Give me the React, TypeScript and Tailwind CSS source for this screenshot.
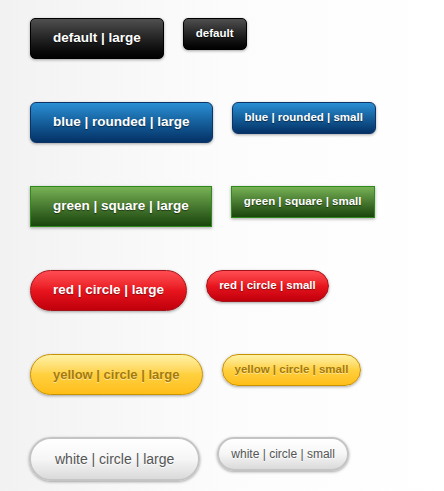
const font = "font-['Liberation_Sans',Arial,sans-serif]"

const rows = [
  {
    large: "default | large",
    small: "default",
    cls: "rounded-[5px] border border-black bg-linear-to-b from-[#505050] to-[#020202] text-white font-bold text-shadow-[0_1px_1px_rgba(0,0,0,0.6)]",
    size: "text-[13.5px]",
  },
  {
    large: "blue | rounded | large",
    small: "blue | rounded | small",
    cls: "rounded-[6px] border border-[#0b3566] bg-linear-to-b from-[#2a8fd4] to-[#053266] text-white font-bold text-shadow-[0_1px_1px_rgba(0,0,0,0.5)]",
    size: "text-[13.5px]",
  },
  {
    large: "green | square | large",
    small: "green | square | small",
    cls: "border border-[#2f8a1c] bg-linear-to-b from-[#78b255] to-[#1a450d] text-white font-bold text-shadow-[0_1px_1px_rgba(0,0,0,0.5)]",
    size: "text-[13.5px]",
  },
  {
    large: "red | circle | large",
    small: "red | circle | small",
    cls: "rounded-full border border-[#a3141a] bg-linear-to-b from-[#ff4b52] via-[#e8141d] to-[#c0000b] text-white font-bold text-shadow-[0_1px_1px_rgba(0,0,0,0.4)]",
    size: "text-[13.5px]",
  },
  {
    large: "yellow | circle | large",
    small: "yellow | circle | small",
    cls: "rounded-full border border-[#c99200] bg-linear-to-b from-[#fff2a4] via-[#ffd03e] to-[#ffbe15] text-[#a57a0a] font-bold text-shadow-[0_1px_0_rgba(255,255,255,0.5)]",
    size: "text-[13px]",
  },
  {
    large: "white | circle | large",
    small: "white | circle | small",
    cls: "rounded-full border-2 border-[#c4c4c4] bg-linear-to-b from-white via-[#f6f6f6] to-[#dadada] text-[#555] font-normal text-shadow-[0_1px_0_rgba(255,255,255,0.8)]",
    size: "text-[14px]",
    white: true,
  },
]

export default function App() {
  return (
    <div className={`min-h-screen w-full bg-linear-to-r from-[#f2f2f2] via-[#fcfcfc] to-white ${font}`}>
      <div className="flex flex-col gap-[43px] pl-[30px] pt-[18px]">
        {rows.map((row, i) => (
          <div key={i} className={`flex items-start ${row.white ? "-mt-px -ml-px gap-[17px]" : "gap-[19px]"}`}>
            <button
              className={`flex items-center justify-center shadow-[0_1px_3px_rgba(0,0,0,0.35)] ${row.white ? "h-[44px] px-[24px]" : "h-[41px] px-[22px]"} ${row.size} ${row.cls}`}
            >
              {row.large}
            </button>
            <button
              className={`flex items-center justify-center px-[12px] shadow-[0_1px_3px_rgba(0,0,0,0.35)] ${row.white ? "h-[34px] text-[12px]" : "h-[32px] text-[11.5px]"} ${row.cls}`}
            >
              {row.small}
            </button>
          </div>
        ))}
      </div>
    </div>
  )
}
